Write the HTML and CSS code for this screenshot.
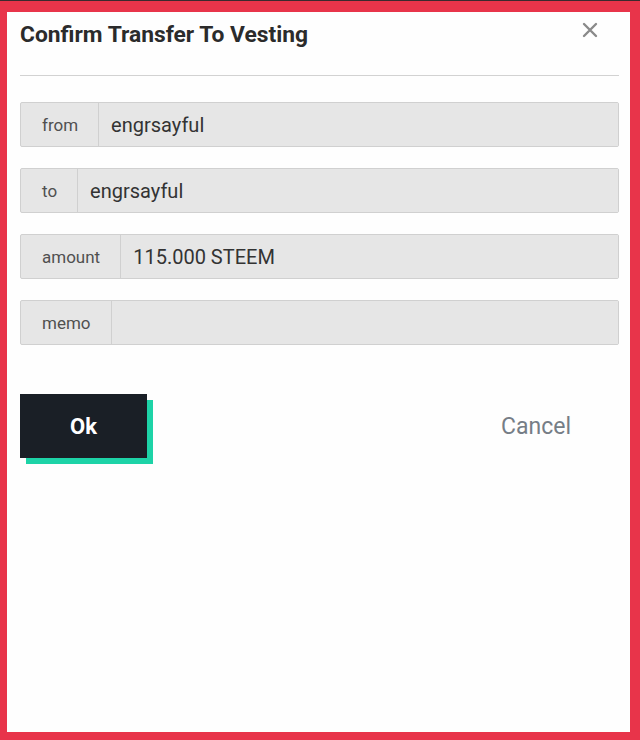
FILE: index.html
```html
<!DOCTYPE html>
<html lang="en">
<head>
    <meta charset="UTF-8">
    <title>Confirm Transfer To Vesting</title>
    <link rel="stylesheet" href="styles.css">
</head>
<body>
<div class="frame">
    <div class="modal">
        <div class="modal-header">
            <h3 class="modal-title">Confirm Transfer To Vesting</h3>
            <button class="close-button" aria-label="close">
                <svg width="16" height="16" viewBox="0 0 16 16">
                    <path d="M2 2 L14 14 M14 2 L2 14" stroke="#8a8a8a" stroke-width="2.4" stroke-linecap="round"/>
                </svg>
            </button>
        </div>
        <hr class="divider">

        <div class="fields">
            <div class="input-group">
                <span class="input-label">from</span>
                <input class="input-value" value="engrsayful" readonly>
            </div>
            <div class="input-group">
                <span class="input-label">to</span>
                <input class="input-value" value="engrsayful" readonly>
            </div>
            <div class="input-group">
                <span class="input-label">amount</span>
                <input class="input-value" value="115.000 STEEM" readonly>
            </div>
            <div class="input-group">
                <span class="input-label">memo</span>
                <input class="input-value" value="" readonly>
            </div>
        </div>

        <div class="actions">
            <button class="ok-button">Ok</button>
            <button class="cancel-button">Cancel</button>
        </div>
    </div>
</div>
</body>
</html>
```

FILE: styles.css
```css
html, body {
    margin: 0;
    height: 100%;
}

body {
    background: #e8344a;
    border-top: 1px solid #3a2a2e;
    box-sizing: border-box;
    font-family: Roboto, "Liberation Sans", sans-serif;
}

.frame {
    height: 100%;
    box-sizing: border-box;
    padding: 11px 10px 8px 7px;
}

.modal {
    height: 100%;
    background: #fefefe;
    padding: 0 11px 0 13px;
    box-sizing: border-box;
    display: flex;
    flex-direction: column;
}

.modal-header {
    display: flex;
    flex-direction: row;
    justify-content: space-between;
    align-items: flex-start;
    padding-top: 10px;
}

.modal-title {
    margin: 0;
    font-size: 22.8px;
    line-height: 26px;
    font-weight: 700;
    color: #2b2b2b;
}

.close-button {
    border: none;
    background: none;
    padding: 0;
    margin: 0 21px 0 0;
    width: 16px;
    height: 16px;
    cursor: pointer;
}

.divider {
    margin: 27px 0 0 0;
    border: none;
    border-top: 1px solid #d2d2d2;
}

.fields {
    display: flex;
    flex-direction: column;
    gap: 21px;
    margin-top: 26px;
}

.input-group {
    display: flex;
    flex-direction: row;
    height: 45px;
    box-sizing: border-box;
    border: 1px solid #d0d0d0;
    border-radius: 2px;
    background: #e6e6e6;
}

.input-label {
    display: flex;
    align-items: center;
    padding: 0 20px 0 21px;
    font-size: 17px;
    color: #505050;
    border-right: 1px solid #d0d0d0;
}

.input-value {
    flex: 1;
    min-width: 0;
    border: none;
    background: #e6e6e6;
    padding: 0 12px;
    font-family: inherit;
    font-size: 20px;
    color: #333;
    outline: none;
}

.actions {
    display: flex;
    flex-direction: row;
    justify-content: space-between;
    align-items: center;
    margin-top: 49px;
}

.ok-button {
    width: 127px;
    height: 64px;
    border: none;
    background: #1a1f26;
    color: #fff;
    font-family: inherit;
    font-size: 22px;
    font-weight: 700;
    box-shadow: 6px 6px 0 #1dd3a7;
    cursor: pointer;
}

.cancel-button {
    width: 130px;
    height: 62px;
    margin-right: 18px;
    border: none;
    background: none;
    color: #767d86;
    font-family: inherit;
    font-size: 23px;
    cursor: pointer;
}
```
